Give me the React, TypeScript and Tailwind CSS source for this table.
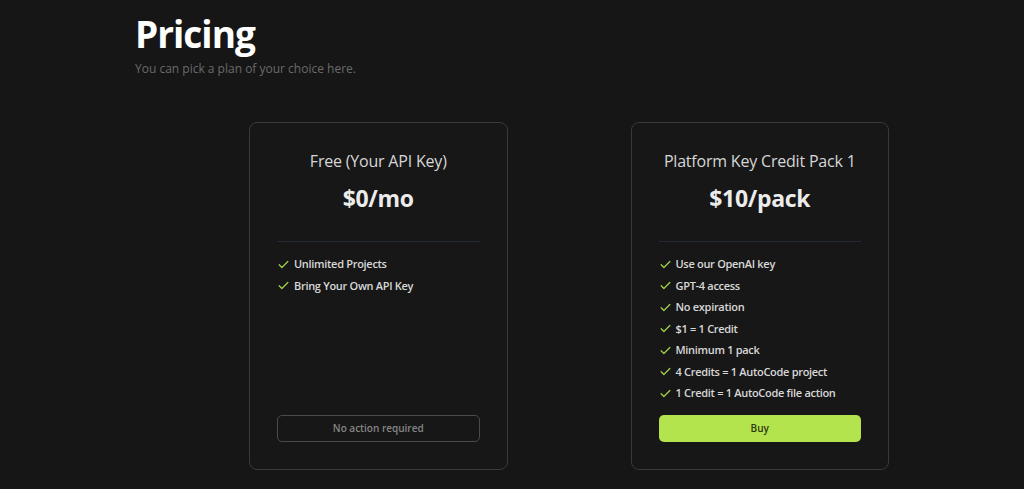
import React from "react";

const font = { fontFamily: '"Open Sans", "Noto Sans", sans-serif' };

function Check() {
  return (
    <svg width="13" height="13" viewBox="0 0 24 24" fill="none" stroke="#a3d14a" strokeWidth="2.3" strokeLinecap="round" strokeLinejoin="round" className="shrink-0">
      <path d="M4 12.5l5 5L20 6.5" />
    </svg>
  );
}

function Card({ title, price, features, cta, primary }: { title: string; price: string; features: string[]; cta: string; primary?: boolean }) {
  return (
    <div className="w-[259px] h-[348px] rounded-lg border border-[#3a3a3a] bg-[#171717] px-[27px] pt-[26px] pb-[27px] flex flex-col">
      <div className="text-center text-[16px] leading-[24px] text-[#d6d6d6] tracking-[-0.2px]">{title}</div>
      <div className="mt-[11px] text-center text-[23px] leading-[28px] font-bold text-[#ececec] tracking-[-0.3px]">{price}</div>
      <div className="mt-[29px] h-px bg-[#232a33]" />
      <ul className="mt-[14px] flex flex-col gap-[5.5px]">
        {features.map((f) => (
          <li key={f} className="flex items-center gap-[4px] text-[11px] leading-[16px] text-[#d8d8d8] font-semibold tracking-[-0.3px]">
            <Check />
            <span>{f}</span>
          </li>
        ))}
      </ul>
      <div className="flex-1" />
      {primary ? (
        <button className="h-[27px] w-full rounded-[5px] bg-[#b3e34d] text-[10px] font-semibold text-[#2c3a10]">{cta}</button>
      ) : (
        <button className="h-[27px] w-full rounded-[5px] border border-[#4a4a4a] text-[10px] font-semibold text-[#858585]">{cta}</button>
      )}
    </div>
  );
}

export default function App() {
  return (
    <div className="min-h-[489px] w-full bg-[#161616]" style={font}>
      <div className="mx-auto w-[754px] pt-[11px]">
        <h1 className="text-[37px] leading-[46px] font-bold text-white tracking-[-1px]">Pricing</h1>
        <p className="mt-[4px] text-[12px] leading-[16px] text-[#6a6a6a]">You can pick a plan of your choice here.</p>
        <div className="mt-[45px] flex gap-[123px] pl-[114px]">
          <Card title="Free (Your API Key)" price="$0/mo" features={["Unlimited Projects", "Bring Your Own API Key"]} cta="No action required" />
          <Card
            title="Platform Key Credit Pack 1"
            price="$10/pack"
            features={["Use our OpenAI key", "GPT-4 access", "No expiration", "$1 = 1 Credit", "Minimum 1 pack", "4 Credits = 1 AutoCode project", "1 Credit = 1 AutoCode file action"]}
            cta="Buy"
            primary
          />
        </div>
      </div>
    </div>
  );
}
